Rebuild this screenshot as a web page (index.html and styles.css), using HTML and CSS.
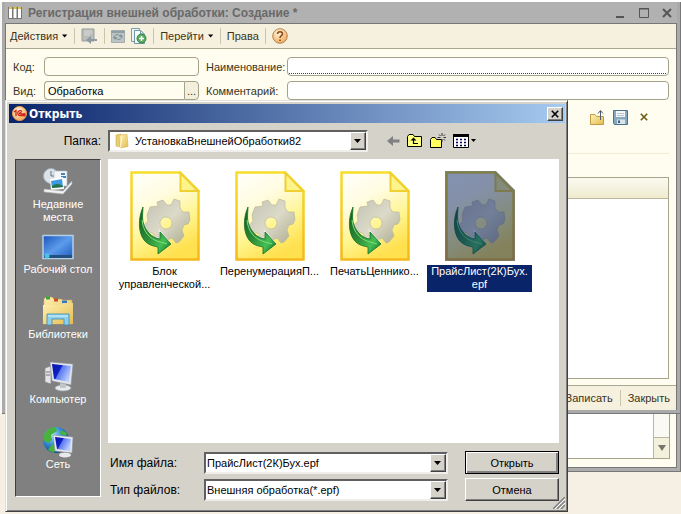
FILE: index.html
```html
<!DOCTYPE html>
<html lang="ru">
<head>
<meta charset="utf-8">
<title>Регистрация внешней обработки</title>
<link rel="stylesheet" href="styles.css">
</head>
<body>
<svg class="defs" aria-hidden="true">
  <defs>
    <linearGradient id="page" x1="0.1" y1="0" x2="0.5" y2="1">
      <stop offset="0" stop-color="#fffffa"/><stop offset="0.35" stop-color="#fffce0"/><stop offset="0.7" stop-color="#fff48c"/><stop offset="1" stop-color="#ffe04e"/>
    </linearGradient>
    <linearGradient id="edge" x1="0" y1="0" x2="0" y2="1">
      <stop offset="0" stop-color="#f6dd28"/><stop offset="1" stop-color="#f4b81c"/>
    </linearGradient>
    <linearGradient id="gear" x1="0" y1="0" x2="1" y2="1">
      <stop offset="0" stop-color="#c2c1b4"/><stop offset="0.5" stop-color="#dcdac8"/><stop offset="1" stop-color="#aaa98c"/>
    </linearGradient>
    <linearGradient id="arrow" x1="0" y1="0" x2="1" y2="1">
      <stop offset="0" stop-color="#0f5a20"/><stop offset="0.5" stop-color="#2f9038"/><stop offset="0.75" stop-color="#46c054"/><stop offset="1" stop-color="#0d6420"/>
    </linearGradient>
    <linearGradient id="screen" x1="0" y1="0" x2="1" y2="1">
      <stop offset="0" stop-color="#1a54b8"/><stop offset="0.5" stop-color="#5c9cec"/><stop offset="1" stop-color="#1c58c0"/>
    </linearGradient>
    <linearGradient id="blue" x1="0" y1="0" x2="1" y2="0.5">
      <stop offset="0" stop-color="#0614a8"/><stop offset="0.45" stop-color="#1022c4"/><stop offset="0.5" stop-color="#5a78f0"/><stop offset="1" stop-color="#b8ccff"/>
    </linearGradient>
    <linearGradient id="folder" x1="0" y1="0" x2="1" y2="1">
      <stop offset="0" stop-color="#fff2b4"/><stop offset="1" stop-color="#e4bc50"/>
    </linearGradient>
    <radialGradient id="globe" cx="0.35" cy="0.3" r="0.8">
      <stop offset="0" stop-color="#a8e4ff"/><stop offset="0.5" stop-color="#2e86d0"/><stop offset="1" stop-color="#0c3c80"/>
    </radialGradient>
    <radialGradient id="orange" cx="0.4" cy="0.3" r="0.8">
      <stop offset="0" stop-color="#fff6dc"/><stop offset="1" stop-color="#efa04c"/>
    </radialGradient>
  </defs>
  <symbol id="epf" viewBox="0 0 70 90">
    <path d="M1.500 1.500H50L68.500 20V88.500H1.500Z" fill="url(#page)" stroke="url(#edge)" stroke-width="2.500"/>
    <path d="M50.500 2V20H68Z" fill="#fff38c" stroke="#f0d030" stroke-width="2"/>
    <path fill="url(#gear)" stroke="#b4b39a" stroke-width=".6" fill-rule="evenodd" d="M28 35L27 31L33 29L37 34L41 34L44 28L50 30L50 37L53 41L59 41L60 49L58 53L54 54L52 59L54 65L49 71L46 72L42 67L35 70L31 74L25 70L24 63L17 60L14 54L18 50L17 44L20 36ZM36 46A6 6 0 1 0 36 58A6 6 0 1 0 36 46Z"/>
    <path fill="none" stroke="#fff" stroke-opacity=".6" stroke-width="2" d="M22 66L31 68L30 61L41 73"/>
    <path fill="url(#arrow)" stroke="#15702a" stroke-width=".8" d="M13 36C8 47 8 61 14 69C18 74 23 75 28 76L28 83L41 73L30 61L30 68C22 67 15 60 13 51C12 46 13 40 13 36Z"/>
    <path fill="none" stroke="#7ede7c" stroke-width="1" d="M12 49C13 60 19 68 30 71L37 73"/>
  </symbol>
  <symbol id="down" viewBox="0 0 8 4"><path d="M0 0H7L3.500 4Z"/></symbol>
  <symbol id="cross" viewBox="0 0 10 10"><path d="M1 1L9 9M9 1L1 9" fill="none" stroke="currentColor" stroke-width="2"/></symbol>
</svg>

<div class="desktop">
  <div class="backwin">
    <div class="backlist"><div class="track"><button class="scrolldown" aria-label="Прокрутить вниз"><svg width="8" height="8" viewBox="0 0 8 8"><path d="M0 1H8L4 7Z" fill="#77766a"/></svg></button></div></div>
  </div>

  <main class="win">
    <header class="caption">
      <svg width="14" height="12" viewBox="0 0 14 12"><rect x="0" y="0" width="14" height="12" fill="#777"/><path d="M1 2H4V11H1ZM5.500 2H8.500V11H5.500ZM10 2H13V11H10Z" fill="#fff"/><path d="M1 1H4M5.500 1H8.500M10 1H13" stroke="#e0c044" stroke-width="2"/></svg>
      <h1>Регистрация внешней обработки: Создание *</h1>
      <button aria-label="Свернуть"><svg width="12" height="12"><path d="M2 10H10" stroke="#555" stroke-width="2"/></svg></button>
      <button aria-label="Развернуть"><svg width="12" height="12"><path d="M1.500 1.500H10.500V10.500H1.500ZM1 2H11" fill="none" stroke="#555"/></svg></button>
      <button aria-label="Закрыть"><svg width="10" height="10"><use href="#cross"/></svg></button>
    </header>
    <nav class="toolbar">
      <button>Действия <svg width="6" height="4"><use href="#down"/></svg></button>
      <i></i>
      <button aria-label="Записать и закрыть"><svg width="17" height="16" viewBox="0 0 17 16"><path d="M1 1H13V13H1Z" fill="#b9bcb9" stroke="#999e9e"/><path d="M3 3H11M3 5H11M3 7H9" stroke="#dadad4"/><path d="M16 11H10V8L5 12L10 16V13H16Z" fill="#8d9aa4"/></svg></button>
      <i></i>
      <button aria-label="Обновить"><svg width="14" height="13" viewBox="0 0 14 13"><path d="M.5.5H13.500V12.500H.5Z" fill="#bcc4c4" stroke="#a4acac"/><path d="M0 2H14" stroke="#8fa0a4" stroke-width="2"/><path d="M3 7C4 4 8 4 9 6M11 7C10 10 6 10 5 8" fill="none" stroke="#7f9298"/><path d="M8 7H12L10 4ZM2 7H6L4 10Z" fill="#7f9298"/></svg></button>
      <button aria-label="Скопировать"><svg width="16" height="16" viewBox="0 0 16 16"><path d="M.5.5H8.500V13.500H.5Z" fill="#eaf4f4" stroke="#7c9ea8"/><path d="M3.500 2.500H9.500L13.500 6V15.500H3.500Z" fill="#f6fcfc" stroke="#6f98a4"/><path d="M9.500 3V6H13" fill="none" stroke="#6f98a4"/><circle cx="10.500" cy="10.500" r="4.500" fill="#57ad5d" stroke="#367f42"/><path d="M8 10.500H13M10.500 8V13" stroke="#fff" stroke-width="1.500"/></svg></button>
      <i></i>
      <button>Перейти <svg width="6" height="4"><use href="#down"/></svg></button>
      <i></i>
      <button>Права</button>
      <i></i>
      <button aria-label="Справка"><svg width="16" height="16" viewBox="0 0 16 16"><circle cx="8" cy="8" r="7.300" fill="url(#orange)" stroke="#b58452"/><path d="M5.500 6C5.500 3 10.500 3 10.500 6C10.500 8 8 7.500 8 10M8 11.500V13" fill="none" stroke="#8c4a1c" stroke-width="1.500"/></svg></button>
    </nav>
    <form class="fields">
      <label for="code">Код:</label><input id="code" class="dim">
      <label for="name">Наименование:</label><span class="required"><input id="name"></span>
      <label for="kind">Вид:</label><span class="picker"><input id="kind" class="dim" value="Обработка"><button type="button">...</button></span>
      <label for="note">Комментарий:</label><input id="note">
    </form>
    <div class="filetools">
      <button aria-label="Открыть файл"><svg width="15" height="16" viewBox="0 0 15 16"><path d="M.5 5.500H5L6.500 7.500H13.500V15.500H.5Z" fill="url(#folder)" stroke="#c09c48"/><path d="M10.500 11V2M8 4.500L10.500 1.500L13 4.500" fill="none" stroke="#515b6b"/></svg></button>
      <button aria-label="Сохранить файл"><svg width="15" height="15" viewBox="0 0 15 15"><path d="M.5.5H14.500V14.500H1.500L.5 13Z" fill="#86a9bf" stroke="#4c748c"/><path d="M3 1H12V7H3Z" fill="#f4f8fa"/><path d="M4 3.500H11M4 5.500H11" stroke="#b4c4cc"/><path d="M4 9.500H12V14H4Z" fill="#dce6ea"/><path d="M5 10.500H7V13H5Z" fill="#395c74"/></svg></button>
      <button class="clear" aria-label="Очистить"><svg width="8" height="8" viewBox="0 0 10 10"><use href="#cross"/></svg></button>
    </div>
    <section class="grid"><div class="gridhead"></div></section>
    <footer class="actions"><button>Записать</button><i></i><button>Закрыть</button></footer>
  </main>

  <section class="dialog" role="dialog" aria-labelledby="dlg">
    <header class="dlgcaption">
      <svg width="15" height="15" viewBox="0 0 15 15"><circle cx="7.500" cy="7.500" r="7" fill="url(#orange)" stroke="#f4a04c"/><path d="M2 6L4 4.500V10M10 5.500C8 3.500 5.500 5 5.800 7.500C6 10 8 9.500 13.500 9.500M9.500 7C7.500 6 7 8 8.500 8H13.500" fill="none" stroke="#cf2014" stroke-width="1.300"/></svg>
      <h2 id="dlg">Открыть</h2>
      <button class="raised" aria-label="Закрыть"><svg width="8" height="8" viewBox="0 0 10 10"><use href="#cross"/></svg></button>
    </header>
    <div class="lookin">
      <label for="dir">Папка:</label>
      <span class="combo">
        <svg class="diricon" width="14" height="16" viewBox="0 0 14 16"><path d="M1 2L6 1V14L1 13Z" fill="#e9cf74" stroke="#cda94c" stroke-width=".6"/><path d="M4 2L12 1.500L13 13.500L5 15Z" fill="url(#folder)" stroke="#d2b052" stroke-width=".6"/><path d="M5 15L7 3.500" stroke="#fffbe0"/></svg>
        <select id="dir"><option>УстановкаВнешнейОбработки82</option></select>
        <b class="raised"><svg width="8" height="4"><use href="#down"/></svg></b>
      </span>
      <div class="navtools">
        <button aria-label="Назад"><svg width="13" height="12" viewBox="0 0 13 12"><path d="M0 6L6 1V4.500H12.500V7.500H6V11Z" fill="#808080"/></svg></button>
        <button aria-label="Вверх"><svg width="16" height="14" viewBox="0 0 16 14"><path d="M.5 12.500V2.500L2 .5H6L7.500 2.500H14.500V12.500Z" fill="#ffff80" stroke="#000"/><path d="M11 9.500H6.500V5.500" fill="none" stroke="#000" stroke-width="1.200"/><path d="M3.500 6.500H9.500L6.500 3.500Z"/></svg></button>
        <button aria-label="Новая папка"><svg width="16" height="16" viewBox="0 0 16 16"><path d="M.5 14.500V6.500L2 4.500H5L6.500 6.500H11.500V14.500Z" fill="#ffff60" stroke="#000"/><path d="M12 0V3M12 6V9M7.500 4.500H10.500M13.500 4.500H16M9 1.500L10.500 3M15 1.500L13.500 3M15 7.500L13.500 6" stroke="#333"/></svg></button>
        <button aria-label="Вид"><svg width="23" height="14" viewBox="0 0 23 14"><path d="M.5.5H15.500V13.500H.5Z" fill="#fff" stroke="#000"/><path d="M0 1.500H16" stroke="#000" stroke-width="3"/><path d="M3 5.500H13M3 8.500H13M3 11.500H13" stroke="#00005a" stroke-width="1.500" stroke-dasharray="2 2"/><path d="M18 5H23L20.500 8Z"/></svg></button>
      </div>
    </div>
    <div class="browse">
      <nav class="places">
        <a href="#recent"><svg width="32" height="32" viewBox="0 0 32 32"><circle cx="9" cy="10" r="7.500" fill="#dce4ea" stroke="#a4b0ba"/><path d="M9 5V10H13" fill="none" stroke="#607080"/><path d="M12 5H25V20H12Z" fill="#f4f6f8" stroke="#b0b8c0" stroke-width=".6"/><path d="M19 8H23M19 11H24" stroke="#3f83b8" stroke-width="2"/><path d="M8 13L21 11L22 23L9 24Z" fill="#fff"/><path d="M9 15L20 13L21 21L10 22Z" fill="#3d9ae0"/><path d="M10 20Q15 16 21 20V21L10 22Z" fill="#257346"/><path d="M2 23L21 25L30 15V18L21 28L2 26Z" fill="#f0f2f3" stroke="#a5aaae" stroke-width=".6"/></svg>Недавние места</a>
        <a href="#desktop"><svg width="32" height="32" viewBox="0 0 32 32"><path d="M1 4.500H31V27.500H1Z" fill="url(#screen)" stroke="#b4cde8" stroke-width="1.500"/><path d="M2 24H30V27H2Z" fill="#245080"/><circle cx="5" cy="25" r="2.500" fill="#46c4e8"/></svg>Рабочий стол</a>
        <a href="#libraries"><svg width="32" height="32" viewBox="0 0 32 32"><path d="M2 3L4 1H10L12 3H19L21 4H30V28H1Z" fill="url(#folder)" stroke="#c5a04c" stroke-width=".6"/><path d="M4 2H8" stroke="#3aa440" stroke-width="3"/><path d="M12 4H16" stroke="#c84c2c" stroke-width="3"/><path d="M20 6H25" stroke="#3478c4" stroke-width="3"/><path d="M1 9H19L21 7H31V28H1Z" fill="url(#folder)"/><path d="M5 29V18H27V29H22V23H10V29Z" fill="#8dd0ec" stroke="#3a8cb4" stroke-width=".8"/><path d="M6 20H26" stroke="#d8f4ff"/></svg>Библиотеки</a>
        <a href="#computer"><svg width="32" height="32" viewBox="0 0 32 32"><path d="M3 7L9 5V23L3 21Z" fill="#e2e4e6" stroke="#85898c" stroke-width=".7"/><path d="M4 11H8M4 14H8" stroke="#777"/><ellipse cx="21" cy="27" rx="8" ry="3" fill="#e8eaec" stroke="#a0a4a8" stroke-width=".7"/><path d="M18 20H24V27H18Z" fill="#c2c6ca"/><path d="M8 1L31 3L29 24L10 20Z" fill="#e2e6ea" stroke="#8b9096" stroke-width=".6"/><path d="M10 3L29 5L27 21L12 18Z" fill="url(#blue)"/></svg>Компьютер</a>
        <a href="#network"><svg width="32" height="32" viewBox="0 0 32 32"><circle cx="14" cy="14" r="13" fill="url(#globe)"/><path d="M2 9Q6 1 13 1L15 5L9 9L10 14L6 17L1 14ZM10 18L14 21L12 27L6 24ZM19 4L25 7L24 10L18 8Z" fill="#48b33c"/><ellipse cx="23" cy="29" rx="6" ry="2.500" fill="#e8eaec"/><path d="M11 9L31 11L30 27L13 25Z" fill="#e4e8ec" stroke="#8b9096" stroke-width=".6"/><path d="M13 11L29 13L28 25L15 23Z" fill="url(#blue)"/></svg>Сеть</a>
      </nav>
      <ul class="files">
        <li><svg width="70" height="90"><use href="#epf"/></svg><span>Блок управленческой...</span></li>
        <li><svg width="70" height="90"><use href="#epf"/></svg><span>ПеренумерацияП...</span></li>
        <li><svg width="70" height="90"><use href="#epf"/></svg><span>ПечатьЦеннико...</span></li>
        <li class="selected"><svg width="70" height="90" viewBox="0 0 70 90"><use href="#epf"/><path d="M0 0H51L70 19V90H0Z" fill="#0a246a" fill-opacity=".5"/></svg><span>ПрайсЛист(2К)Бух.<wbr>epf</span></li>
      </ul>
      <form class="choice">
        <label for="fname">Имя файла:</label>
        <span class="combo"><input id="fname" value="ПрайсЛист(2К)Бух.epf"><b class="raised"><svg width="8" height="4"><use href="#down"/></svg></b></span>
        <button type="button" class="raised default">Открыть</button>
        <label for="ftype">Тип файлов:</label>
        <span class="combo"><select id="ftype"><option>Внешняя обработка(*.epf)</option></select><b class="raised"><svg width="8" height="4"><use href="#down"/></svg></b></span>
        <button type="button" class="raised">Отмена</button>
      </form>
    </div>
    <svg class="grip" width="12" height="12" viewBox="0 0 12 12"><path d="M0 12L12 0M4 12L12 4M8 12L12 8" stroke="#808080" stroke-width="1.500"/><path d="M2 12L12 2M6 12L12 6" stroke="#fff"/></svg>
  </section>
</div>
</body>
</html>
```
FILE: styles.css
```css
* { box-sizing: border-box; }
body {
  margin: 0;
  background: #f6efe4;
  font: 11px/14px "Liberation Sans", Arial, sans-serif;
  color: #3c3418;
}
button, input, select { font: inherit; color: inherit; margin: 0; }
button { background: none; border: 0; padding: 0; }
svg { display: block; flex: none; }
h1, h2 { margin: 0; font-size: 12px; }
.defs { position: absolute; width: 0; height: 0; }

.desktop { position: relative; min-height: 100vh; overflow: hidden; border-top: 2px solid #fefefe; }

/* Window partly hidden behind the main one */
.backwin {
  position: absolute;
  inset: 0 1px auto 0;
  height: 469px;
  padding: 0 7px 9px 0;
  margin-left: 8px;
  background: #fffdf0;
  border: solid #adadad;
  border-width: 0 3px 3px;
  box-shadow: inset -1px -1px #777, 1px 1px #777;
}
.backlist {
  height: 100%;
  display: flex;
  justify-content: flex-end;
  background: #fff;
  border: 1px solid #a7a68c;
}
.track {
  display: flex;
  align-items: flex-end;
  width: 16px;
  background: #faf9f4;
  border-left: 1px solid #b9b79c;
}
.scrolldown {
  flex: 1;
  height: 21px;
  display: grid;
  place-items: center;
  background: #f3f0dc;
  border-top: 1px solid #b9b79c;
}

/* Main window */
.win {
  position: relative;
  margin: 0 1px 0 2px;
  background: #fffdf0;
  border: solid #aaa;
  border-width: 0 3px 3px;
  box-shadow: inset 1px 0 #777, inset -1px 0 #777, inset 0 -1px #777, 0 1px #777, 1px 0 #777, -2px 0 #f9f8f6;
}
.caption {
  display: flex;
  align-items: center;
  gap: 12px;
  height: 22px;
  padding: 0 5px 0 3px;
  background: #b1b1b1;
  border-bottom: 1px solid #777;
  color: #555;
}
.caption h1 { flex: 1; margin-left: -6px; color: #696969; }
.toolbar, .actions {
  display: flex;
  align-items: center;
  margin: 0 1px;
  background: #f6f0df;
}
.toolbar { gap: 6px; height: 25px; padding: 0 4px; border-bottom: 1px solid #a9a892; }
.toolbar button { display: flex; align-items: center; gap: 4px; }
.toolbar i, .actions i { width: 1px; height: 16px; background: #c9c5ab; }
.fields {
  display: grid;
  grid-template-columns: 24px 155px 74px 1fr;
  gap: 5px 7px;
  align-items: center;
  padding: 8px 8px 0;
}
.fields input {
  width: 100%;
  height: 19px;
  padding: 0 3px;
  background: #fff;
  border: 1px solid #a3a28a;
  border-radius: 4px;
  color: #000;
}
.fields input.dim { background: #fffdf0; }
.required { position: relative; }
.required::after {
  content: "";
  position: absolute;
  inset: auto 3px 2px 2px;
  border-bottom: 1px dotted #a02020;
}
.required, .picker { display: flex; }
.fields .picker input { flex: 1; min-width: 0; border-radius: 4px 0 0 4px; border-right: 0; }
.picker button {
  width: 15px;
  background: #f4efdc;
  border: 1px solid #a3a28a;
  border-radius: 0 4px 4px 0;
}
.filetools {
  display: flex;
  justify-content: flex-end;
  align-items: center;
  gap: 8px;
  height: 54px;
  margin: 0 8px;
  padding: 0 21px 19px;
  border-bottom: 1px solid #f1ecd4;
}
.clear { margin-left: 4px; color: #6b5c10; }
.grid {
  height: 202px;
  margin: 23px 8px 6px;
  background: #fff;
  border: 1px solid #a7a68c;
}
.gridhead {
  height: 21px;
  background: linear-gradient(#fbfaf0, #efebcf);
  border-bottom: 1px solid #bcb99b;
}
.actions {
  justify-content: flex-end;
  gap: 7px;
  height: 25px;
  padding: 0 6px 0;
  border-top: 1px solid #a9a892;
}

/* File dialog */
.dialog {
  position: absolute;
  left: 5px;
  right: 113px;
  top: 98px;
  padding: 3px 2px 10px 3px;
  background: #d5d2ca;
  border: 1px solid;
  border-color: #e2dfd8 #404040 #404040 #e2dfd8;
  box-shadow: inset 1px 1px #fff, inset -1px -1px #808080;
  color: #000;
}
.dlgcaption {
  display: flex;
  align-items: center;
  gap: 2px;
  height: 19px;
  padding: 0 2px 0 3px;
  background: linear-gradient(90deg, #0a246a, #a6caf0);
  color: #fff;
}
.dlgcaption h2 { flex: 1; font-family: "DejaVu Sans Condensed", "DejaVu Sans", sans-serif; }
.raised {
  display: grid;
  place-items: center;
  background: #d5d2ca;
  border: 1px solid;
  border-color: #fff #404040 #404040 #fff;
  box-shadow: inset -1px -1px #808080;
  color: #000;
}
.dlgcaption .raised { width: 16px; height: 14px; }
.lookin { display: flex; align-items: center; height: 36px; }
.lookin label { width: 92px; text-align: right; }
.lookin .combo { width: 260px; margin: 0 19px 0 7px; }
.combo {
  position: relative;
  display: flex;
  align-items: center;
  height: 22px;
  background: #fff;
  border: 2px solid;
  border-color: #606060 #f0eeea #f0eeea #606060;
}
.combo input, .combo select {
  flex: 1;
  min-width: 0;
  height: 100%;
  padding: 0 18px 0 1px;
  background: none;
  border: 0;
  border-radius: 0;
  appearance: none;
}
.combo .raised {
  position: absolute;
  inset: 0 0 0 auto;
  width: 16px;
  pointer-events: none;
}
.diricon { margin: 0 5px; }
.navtools { display: flex; align-items: center; gap: 7px; }
.browse {
  display: grid;
  grid-template-columns: 86px 1fr;
  column-gap: 7px;
  margin: 0 6px;
  grid-template-rows: 284px auto;
  row-gap: 8px;
}
.places {
  grid-row: 1 / 3;
  margin-bottom: 4px;
  padding-top: 6px;
  background: #808080;
  border: 1px solid;
  border-color: #404040 #fff #fff #404040;
  display: flex;
  flex-direction: column;
  gap: 20px;
}
.places a {
  display: flex;
  flex-direction: column;
  align-items: center;
  padding: 0 12px;
  color: #fff;
  text-align: center;
  text-decoration: none;
  line-height: 13px;
  white-space: nowrap;
}
.places a:first-child { white-space: normal; margin-bottom: -13px; }
.files {
  margin: 0;
  padding: 12px 4px;
  list-style: none;
  background: #fff;
  display: grid;
  grid-template-columns: repeat(auto-fill, 105px);
  align-content: start;
}
.files li {
  display: flex;
  flex-direction: column;
  align-items: center;
  gap: 4px;
  text-align: center;
  line-height: 13px;
}
.files span { padding: 0 2px; }
.selected span { background: #0a246a; color: #fff; padding-bottom: 1px; }
.choice {
  display: grid;
  grid-template-columns: 96px 1fr 94px;
  align-items: center;
  row-gap: 4px;
}
.choice label, .lookin label { font-size: 12px; }
.choice label { padding-left: 2px; }
.choice .combo { margin-right: 17px; }
.choice > button { height: 23px; }
.choice .default { outline: 1px solid #000; outline-offset: -1px; border-color: #000; box-shadow: inset 1px 1px #fff, inset -2px -2px #808080; }
.grip { position: absolute; right: 2px; bottom: 2px; }
```
